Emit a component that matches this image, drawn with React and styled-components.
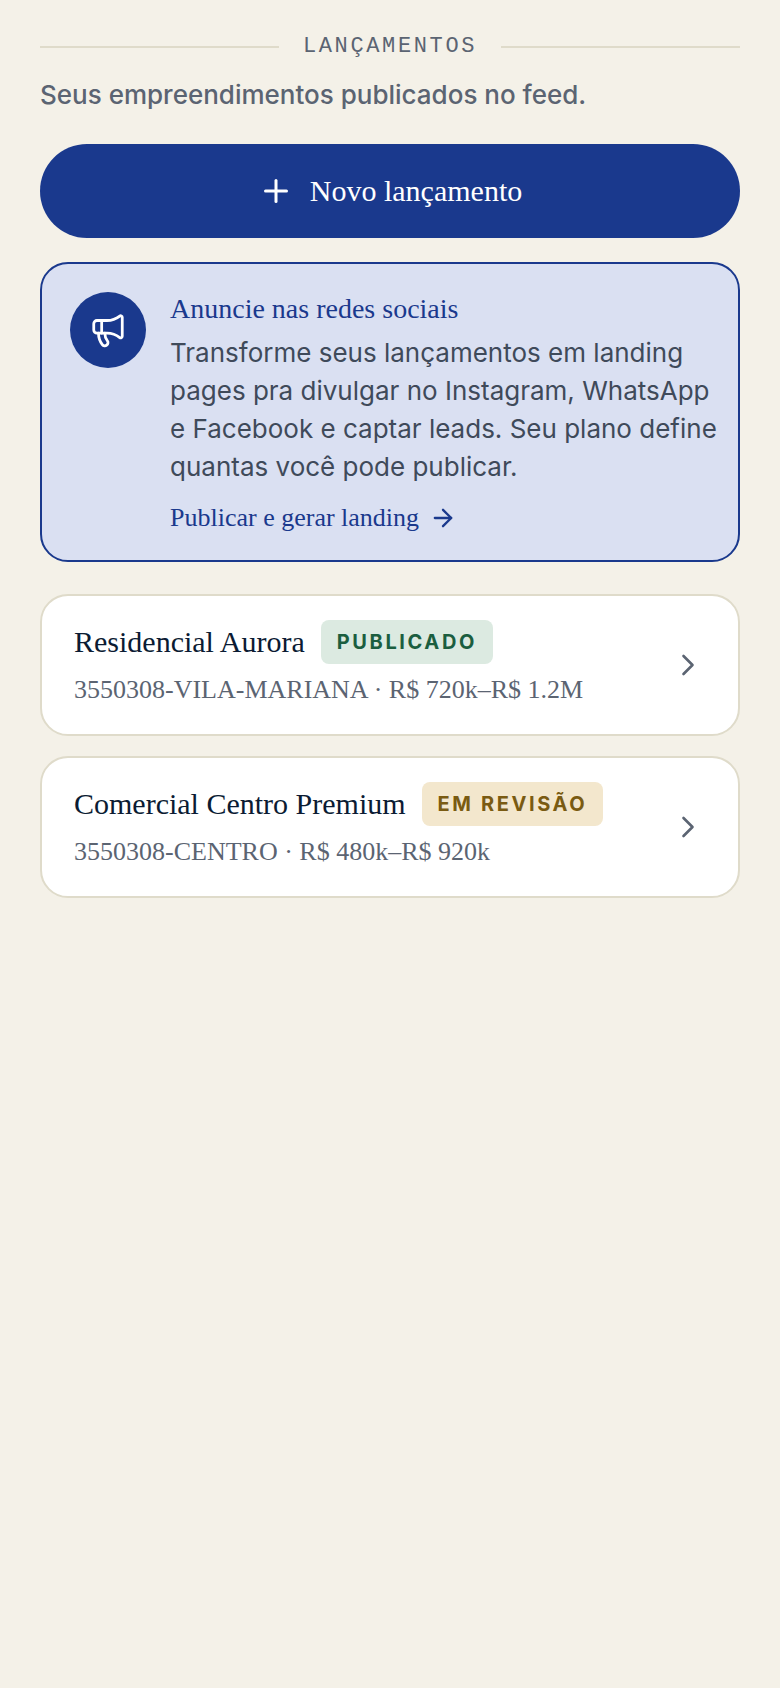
import styled, { createGlobalStyle } from "styled-components";
import { ArrowRight, ChevronRight, Megaphone, Plus } from "lucide-react";

const launches = [
  {
    id: 1,
    name: "Residencial Aurora",
    info: "3550308-VILA-MARIANA · R$ 720k–R$ 1.2M",
    status: "published",
  },
  {
    id: 2,
    name: "Comercial Centro Premium",
    info: "3550308-CENTRO · R$ 480k–R$ 920k",
    status: "review",
  },
];

const statuses = {
  published: { label: "Publicado", color: "#1b5e3f", background: "#dceae1" },
  review: { label: "Em revisão", color: "#7a5b12", background: "#f3e7cd" },
};

export default function App() {
  return (
    <>
      <GlobalStyle />
      <Page>
        <Heading>Lançamentos</Heading>
        <Subtitle>Seus empreendimentos publicados no feed.</Subtitle>
        <NewButton type="button">
          <Plus size={36} strokeWidth={2} aria-hidden="true" />
          Novo lançamento
        </NewButton>

        <Promo>
          <PromoIcon>
            <Megaphone size={38} strokeWidth={1.75} aria-hidden="true" />
          </PromoIcon>
          <PromoBody>
            <PromoTitle>Anuncie nas redes sociais</PromoTitle>
            <PromoText>
              Transforme seus lançamentos em landing pages pra divulgar no
              Instagram, WhatsApp e Facebook e captar leads. Seu plano define
              quantas você pode publicar.
            </PromoText>
            <PromoLink href="#landing">
              Publicar e gerar landing
              <ArrowRight size={28} strokeWidth={2} aria-hidden="true" />
            </PromoLink>
          </PromoBody>
        </Promo>

        <List>
          {launches.map((launch) => (
            <li key={launch.id}>
              <LaunchCard href={`#launch-${launch.id}`}>
                <LaunchBody>
                  <LaunchTop>
                    <LaunchName>{launch.name}</LaunchName>
                    <Badge $status={launch.status}>
                      {statuses[launch.status].label}
                    </Badge>
                  </LaunchTop>
                  <LaunchInfo>{launch.info}</LaunchInfo>
                </LaunchBody>
                <ChevronRight size={36} strokeWidth={1.75} aria-hidden="true" />
              </LaunchCard>
            </li>
          ))}
        </List>
      </Page>
    </>
  );
}

const serif = `"Liberation Serif", "Times New Roman", serif`;
const sans = `Inter, "Liberation Sans", sans-serif`;
const mono = `"Liberation Mono", "Courier New", monospace`;

const GlobalStyle = createGlobalStyle`
  * {
    box-sizing: border-box;
    margin: 0;
    padding: 0;
  }
  body {
    background: #f4f1e8;
    font-family: ${serif};
    -webkit-font-smoothing: antialiased;
  }
  a {
    color: inherit;
    text-decoration: none;
  }
  svg {
    flex-shrink: 0;
  }
`;

const Page = styled.main`
  min-height: 100vh;
  padding: 32px 40px;
`;

const Heading = styled.h1`
  display: flex;
  align-items: center;
  gap: 24px;
  color: #5b6472;
  font-family: ${mono};
  font-size: 22px;
  font-weight: 400;
  line-height: 30px;
  letter-spacing: 0.12em;
  text-transform: uppercase;
  &::before,
  &::after {
    content: "";
    flex: 1;
    height: 2px;
    background: #dfdbca;
  }
`;

const Subtitle = styled.p`
  margin: 14px 0 30px;
  color: #5b6472;
  font-family: ${sans};
  font-size: 26px;
  font-weight: 500;
  line-height: 38px;
`;

const NewButton = styled.button`
  display: flex;
  align-items: center;
  justify-content: center;
  gap: 16px;
  width: 100%;
  padding: 30px 32px;
  border: none;
  border-radius: 48px;
  background: #1a398d;
  color: #ffffff;
  font-family: ${serif};
  font-size: 30px;
  line-height: 34px;
  cursor: pointer;
  svg {
    margin: -1px 0;
  }
`;

const Promo = styled.section`
  display: flex;
  align-items: flex-start;
  gap: 24px;
  margin-top: 24px;
  padding: 28px 20px 28px 28px;
  border: 2px solid #1a398d;
  border-radius: 28px;
  background: #dae0f2;
`;

const PromoIcon = styled.div`
  display: flex;
  align-items: center;
  justify-content: center;
  flex-shrink: 0;
  width: 76px;
  height: 76px;
  border-radius: 50%;
  background: #1a398d;
  color: #ffffff;
`;

const PromoBody = styled.div`
  flex: 1;
  min-width: 0;
  color: #1a398d;
`;

const PromoTitle = styled.h2`
  font-size: 28px;
  font-weight: 400;
  line-height: 34px;
`;

const PromoText = styled.p`
  margin: 8px 0 18px;
  color: #3f4a5a;
  font-family: ${sans};
  font-size: 26px;
  line-height: 38px;
`;

const PromoLink = styled.a`
  display: inline-flex;
  align-items: center;
  gap: 10px;
  font-size: 26px;
  line-height: 28px;
  vertical-align: top;
`;

const List = styled.ul`
  display: flex;
  flex-direction: column;
  gap: 20px;
  margin-top: 32px;
  list-style: none;
`;

const LaunchCard = styled.a`
  display: flex;
  align-items: center;
  justify-content: space-between;
  gap: 24px;
  padding: 24px 32px;
  border: 2px solid #dfdbca;
  border-radius: 28px;
  background: #ffffff;
  color: #5b6472;
`;

const LaunchBody = styled.div`
  min-width: 0;
`;

const LaunchTop = styled.div`
  display: flex;
  align-items: center;
  flex-wrap: wrap;
  gap: 16px;
`;

const LaunchName = styled.h3`
  color: #0b1b33;
  font-size: 30px;
  font-weight: 400;
  line-height: 44px;
`;

const Badge = styled.span`
  padding: 8px 16px;
  border-radius: 8px;
  background: ${(props) => statuses[props.$status].background};
  color: ${(props) => statuses[props.$status].color};
  font-family: ${sans};
  font-size: 20px;
  font-weight: 700;
  line-height: 28px;
  letter-spacing: 0.13em;
  text-transform: uppercase;
`;

const LaunchInfo = styled.p`
  margin-top: 6px;
  font-size: 26px;
  line-height: 40px;
`;
